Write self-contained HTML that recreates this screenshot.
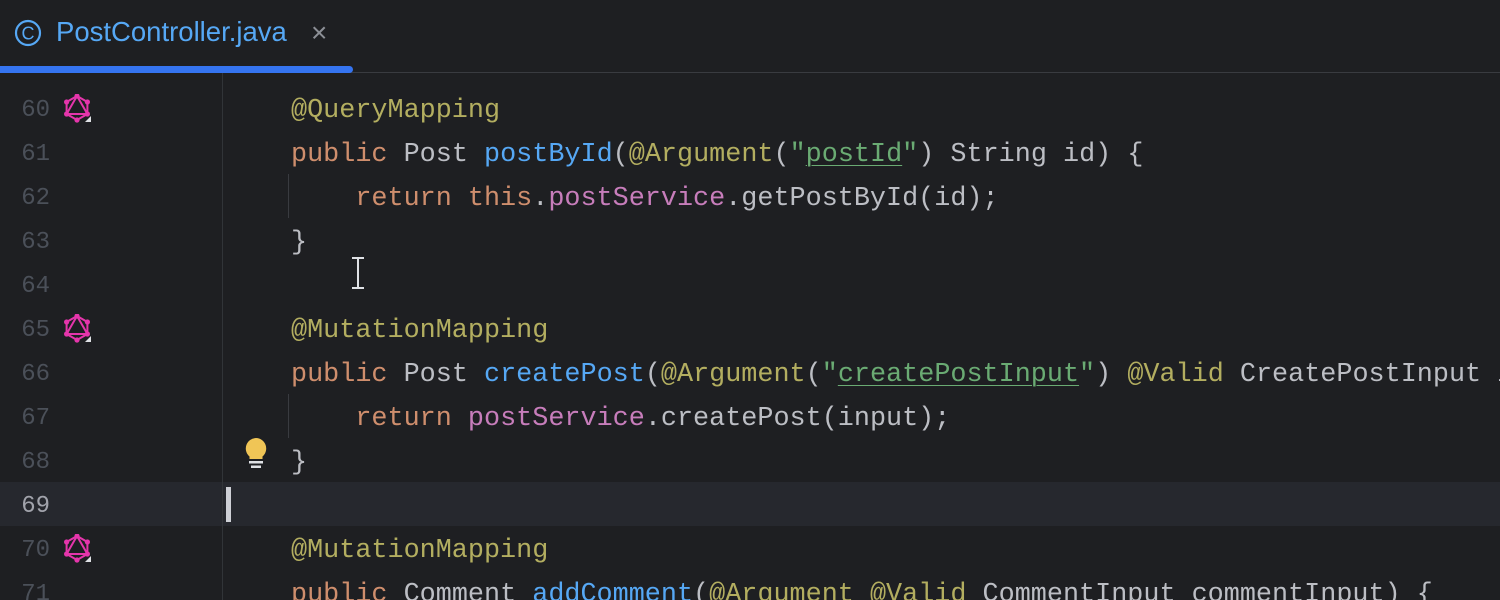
<!DOCTYPE html>
<html style="overflow:hidden"><head><style>
body{margin:0;width:1500px;height:600px;background:#1e1f22;overflow:hidden;font-family:"Liberation Mono",monospace;position:relative}
.tab{position:absolute;left:0;top:0;width:1500px;height:72px;border-bottom:1px solid #393b40;background:#1e1f22}
.tabt{position:absolute;left:56px;top:16px;font:27.5px "Liberation Sans",sans-serif;color:#56a8f5}
.ul{position:absolute;left:0;top:66px;width:353px;height:7px;background:#3574f0;border-radius:0 4px 4px 0}
.gut{position:absolute;left:222px;top:73px;width:1px;height:527px;background:#313438}
.cur{position:absolute;left:0;top:482px;width:1500px;height:44px;background:#26282e}
.ln{position:absolute;left:0;width:50px;text-align:right;font-size:24px;color:#4b5059;line-height:44px;margin-top:3px}
.wrap{position:absolute;left:0;top:0;width:1500px;height:600px;overflow:hidden}
.code{position:absolute;left:291px;font-size:26.8px;color:#bcbec4;line-height:44px;white-space:pre;margin-top:3px}
.k{color:#cf8e6d}.a{color:#b3ae60}.m{color:#56a8f5}.s{color:#6aab73}.s u{text-decoration-thickness:1px;text-underline-offset:4px}.f{color:#c77dbb}
.guide{position:absolute;left:288px;width:1px;height:44px;background:#393b40}
</style></head><body>
<div class="wrap">
<div class="tab">
<svg style="position:absolute;left:14px;top:19px" width="28" height="28"><circle cx="14" cy="14" r="12" fill="none" stroke="#56a8f5" stroke-width="2.2"/><text x="14" y="20.5" text-anchor="middle" font-family="Liberation Sans" font-size="18" fill="#56a8f5">C</text></svg>
<div class="tabt">PostController.java</div>
<div style="position:absolute;left:311px;top:17px;color:#8c8f96;font:28px 'Liberation Sans',sans-serif">×</div>
<div class="ul"></div>
</div>
<div class="cur"></div>
<div class="gut"></div>
<div style="position:absolute;left:226px;top:487px;width:5px;height:35px;background:#ced0d6"></div>
<div class="guide" style="top:174px"></div>
<div class="guide" style="top:394px"></div>

<div class="ln" style="top:86px">60</div>
<div class="ln" style="top:130px">61</div>
<div class="ln" style="top:174px">62</div>
<div class="ln" style="top:218px">63</div>
<div class="ln" style="top:262px">64</div>
<div class="ln" style="top:306px">65</div>
<div class="ln" style="top:350px">66</div>
<div class="ln" style="top:394px">67</div>
<div class="ln" style="top:438px">68</div>
<div class="ln" style="top:482px;color:#a1a3ab">69</div>
<div class="ln" style="top:526px">70</div>
<div class="ln" style="top:570px">71</div>

<svg width="0" height="0" style="position:absolute"><defs><g id="gq"><polygon points="0,-12 10.4,-6 10.4,6 0,12 -10.4,6 -10.4,-6" fill="none" stroke="#e535ab" stroke-width="2"/><polygon points="0,-12 10.4,6 -10.4,6" fill="none" stroke="#e535ab" stroke-width="2"/><g fill="#e535ab"><circle cx="0" cy="-12" r="2.6"/><circle cx="10.4" cy="-6" r="2.6"/><circle cx="10.4" cy="6" r="2.6"/><circle cx="0" cy="12" r="2.6"/><circle cx="-10.4" cy="6" r="2.6"/><circle cx="-10.4" cy="-6" r="2.6"/></g><polygon points="14,8 14,14 8,14" fill="#dfe1e5"/></g></defs></svg>
<svg style="position:absolute;left:62px;top:94px" width="32" height="32"><use href="#gq" transform="translate(15,14)"/></svg>
<svg style="position:absolute;left:62px;top:314px" width="32" height="32"><use href="#gq" transform="translate(15,14)"/></svg>
<svg style="position:absolute;left:62px;top:534px" width="32" height="32"><use href="#gq" transform="translate(15,14)"/></svg>

<svg style="position:absolute;left:241px;top:436px" width="30" height="34"><path d="M15 2a10.5 10.5 0 0 0-6.5 18.5v2.5h13v-2.5a10.5 10.5 0 0 0-6.5-18.5z" fill="#f0c556"/><rect x="8" y="25" width="14" height="2.5" fill="#dfe1e5"/><rect x="10" y="29.5" width="10" height="2.5" fill="#dfe1e5"/></svg>

<div class="code" style="top:86px"><span class="a">@QueryMapping</span></div>
<div class="code" style="top:130px"><span class="k">public</span> Post <span class="m">postById</span>(<span class="a">@Argument</span>(<span class="s">"<u>postId</u>"</span>) String id) {</div>
<div class="code" style="top:174px">    <span class="k">return this</span>.<span class="f">postService</span>.getPostById(id);</div>
<div class="code" style="top:218px">}</div>
<div class="code" style="top:306px"><span class="a">@MutationMapping</span></div>
<div class="code" style="top:350px"><span class="k">public</span> Post <span class="m">createPost</span>(<span class="a">@Argument</span>(<span class="s">"<u>createPostInput</u>"</span>) <span class="a">@Valid</span> CreatePostInput i</div>
<div class="code" style="top:394px">    <span class="k">return</span> <span class="f">postService</span>.createPost(input);</div>
<div class="code" style="top:438px">}</div>
<div class="code" style="top:526px"><span class="a">@MutationMapping</span></div>
<div class="code" style="top:570px"><span class="k">public</span> Comment <span class="m">addComment</span>(<span class="a">@Argument</span> <span class="a">@Valid</span> CommentInput commentInput) {</div>

<svg style="position:absolute;left:348px;top:256px" width="20" height="34"><path d="M4 2h12M10 2v30M4 32h12" stroke="#dfe1e5" stroke-width="2" fill="none"/></svg>
</div>
</body></html>
